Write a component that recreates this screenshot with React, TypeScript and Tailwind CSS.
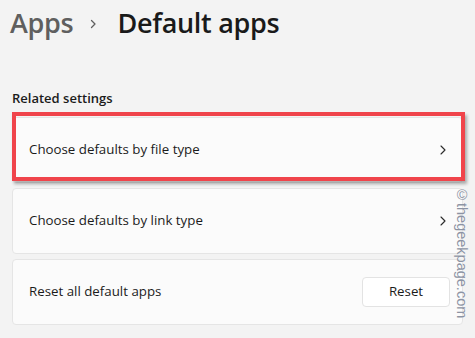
import React from "react";

function Chevron({ className = "" }: { className?: string }) {
  return (
    <svg width="6" height="10" viewBox="0 0 6 10" className={className} fill="none">
      <path d="M1 1 L5 5 L1 9" stroke="#2b2b2b" strokeWidth="1.1" strokeLinecap="round" strokeLinejoin="round" />
    </svg>
  );
}

export default function App() {
  return (
    <div
      className="relative w-[475px] h-[338px] overflow-hidden bg-[#f3f3f3] text-[#1b1b1b]"
      style={{ fontFamily: '"Open Sans", "Noto Sans", sans-serif' }}
    >
      <div className="flex items-baseline pl-[10px] pt-[5px] text-[27px] leading-[36px] font-semibold tracking-[-0.3px]">
        <span className="text-[#5f5f5f]">Apps</span>
        <svg width="7" height="10" viewBox="0 0 7 10" className="ml-[17px] mr-[20px] self-center mt-[1px]" fill="none">
          <path d="M1.5 1.5 L5 5 L1.5 8.5" stroke="#5f5f5f" strokeWidth="1.3" strokeLinecap="round" strokeLinejoin="round" />
        </svg>
        <span className="text-[#1a1a1a]">Default apps</span>
      </div>

      <div className="mt-[47px] pl-[12px] text-[13px] leading-[20px] font-semibold">Related settings</div>

      <div className="mt-[9px] px-[12px] flex flex-col gap-[5px] text-[13.3px]">
        <div className="h-[66px] rounded-[4px] border border-[#e5e5e5] bg-[#fbfbfb] flex items-center justify-between pl-[16px] pr-[16px]">
          <span>Choose defaults by file type</span>
          <Chevron />
        </div>
        <div className="h-[66px] rounded-[4px] border border-[#e5e5e5] bg-[#fbfbfb] flex items-center justify-between pl-[16px] pr-[16px]">
          <span>Choose defaults by link type</span>
          <Chevron />
        </div>
        <div className="h-[66px] rounded-[4px] border border-[#e5e5e5] bg-[#fbfbfb] flex items-center justify-between pl-[16px] pr-[12px]">
          <span>Reset all default apps</span>
          <button className="w-[88px] h-[30px] rounded-[4px] border border-[#e3e3e3] bg-white text-[13.3px] text-[#1b1b1b]">
            Reset
          </button>
        </div>
      </div>

      <div className="absolute left-[12px] top-[112px] w-[453px] h-[69px] border-[4px] border-[#f0444b] shadow-[2px_3px_3px_rgba(0,0,0,0.3)]" />

      <div
        className="absolute left-[455px] top-[187px] text-[14.5px] leading-[14px] text-[#8c93a3]"
        style={{ writingMode: "vertical-rl", fontFamily: '"Liberation Sans", Arial, sans-serif', textShadow: "0 0 1px #fff" }}
      >
        ©thegeekpage.com
      </div>
    </div>
  );
}
